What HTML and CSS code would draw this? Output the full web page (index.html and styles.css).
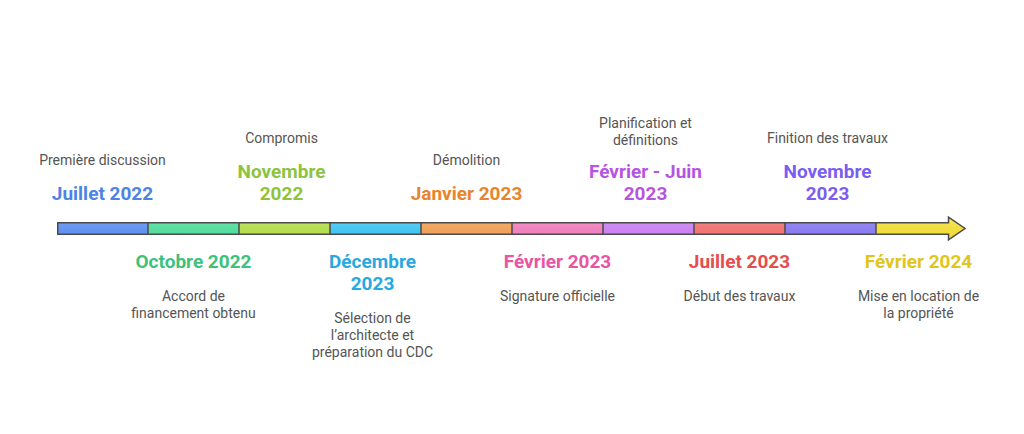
FILE: index.html
```html
<!DOCTYPE html>
<html lang="fr">
<head>
<meta charset="utf-8">
<title>Chronologie du projet</title>
<link rel="stylesheet" href="styles.css">
</head>
<body>
<main class="page">
  <section class="timeline">
    <div class="event top c1">
      <p class="desc">Première discussion</p>
      <p class="date blue">Juillet 2022</p>
    </div>
    <div class="event top c3 nudge">
      <p class="desc">Compromis</p>
      <p class="date lime">Novembre 2022</p>
    </div>
    <div class="event top c5">
      <p class="desc">Démolition</p>
      <p class="date orange">Janvier 2023</p>
    </div>
    <div class="event top c7 nudge tight">
      <p class="desc">Planification et définitions</p>
      <p class="date purple">Février - Juin 2023</p>
    </div>
    <div class="event top c9 nudge">
      <p class="desc">Finition des travaux</p>
      <p class="date indigo">Novembre 2023</p>
    </div>

    <svg class="bar" width="910" height="26" viewBox="0 0 910 26" aria-hidden="true">
      <defs>
        <linearGradient id="shine" x1="0" y1="0" x2="0" y2="1">
          <stop offset="0" stop-color="#ffffff" stop-opacity="0.2"/>
          <stop offset="1" stop-color="#000000" stop-opacity="0.03"/>
        </linearGradient>
      </defs>
      <rect x="0" y="7" width="91" height="13" fill="#6398ff"/>
      <rect x="91" y="7" width="91" height="13" fill="#55e9a4"/>
      <rect x="182" y="7" width="91" height="13" fill="#bfea50"/>
      <rect x="273" y="7" width="91" height="13" fill="#42d1ff"/>
      <rect x="364" y="7" width="91" height="13" fill="#ffa95c"/>
      <rect x="455" y="7" width="91" height="13" fill="#ff85c8"/>
      <rect x="546" y="7" width="91" height="13" fill="#d588ff"/>
      <rect x="637" y="7" width="91" height="13" fill="#ff7876"/>
      <rect x="728" y="7" width="91" height="13" fill="#8f80ff"/>
      <path d="M819,7 H891 V1.5 L908.5,13.5 L891,25.5 V20 H819 Z" fill="#ffea3a"/>
      <path d="M0,7 H891 V1.5 L908.5,13.5 L891,25.5 V20 H0 Z" fill="url(#shine)"/>
      <g stroke="#4a4a4a" stroke-width="1.5">
        <line x1="91" y1="7" x2="91" y2="20"/>
        <line x1="182" y1="7" x2="182" y2="20"/>
        <line x1="273" y1="7" x2="273" y2="20"/>
        <line x1="364" y1="7" x2="364" y2="20"/>
        <line x1="455" y1="7" x2="455" y2="20"/>
        <line x1="546" y1="7" x2="546" y2="20"/>
        <line x1="637" y1="7" x2="637" y2="20"/>
        <line x1="728" y1="7" x2="728" y2="20"/>
        <line x1="819" y1="7" x2="819" y2="20"/>
      </g>
      <path d="M0.75,7.75 H891.5 V2.2 L908,13.5 L891.5,24.8 V19.25 H0.75 Z" fill="none" stroke="#4a4a4a" stroke-width="1.5" stroke-linejoin="miter"/>
    </svg>

    <div class="event bottom c2">
      <p class="date green">Octobre 2022</p>
      <p class="desc">Accord de financement obtenu</p>
    </div>
    <div class="event bottom c4 nudge">
      <p class="date cyan">Décembre 2023</p>
      <p class="desc">Sélection de l’architecte et préparation du CDC</p>
    </div>
    <div class="event bottom c6">
      <p class="date pink">Février 2023</p>
      <p class="desc">Signature officielle</p>
    </div>
    <div class="event bottom c8">
      <p class="date red">Juillet 2023</p>
      <p class="desc">Début des travaux</p>
    </div>
    <div class="event bottom c10 nudge">
      <p class="date yellow">Février 2024</p>
      <p class="desc">Mise en location de la propriété</p>
    </div>
  </section>
</main>
</body>
</html>
```
FILE: styles.css
```css
html, body {
  margin: 0;
  padding: 0;
  background: #ffffff;
}

body {
  font-family: Roboto, "Liberation Sans", Arial, sans-serif;
  width: 1024px;
  height: 434px;
  overflow: hidden;
}

.page {
  padding: 114px 0 0 57px;
}

.timeline {
  display: grid;
  grid-template-columns: repeat(10, 91px);
  grid-template-rows: 91px 26px auto;
  row-gap: 10px;
}

.event {
  display: flex;
  flex-direction: column;
  align-items: center;
  width: 91px;
}

.event.nudge {
  margin-inline-start: -3px;
}

.event.top {
  grid-row: 1;
  align-self: end;
  gap: 14px;
}

.event.top.tight {
  gap: 12px;
}

.event.bottom {
  grid-row: 3;
  align-self: start;
  gap: 15px;
}

.c1 { grid-column: 1; }
.c2 { grid-column: 2; }
.c3 { grid-column: 3; }
.c4 { grid-column: 4; }
.c5 { grid-column: 5; }
.c6 { grid-column: 6; }
.c7 { grid-column: 7; }
.c8 { grid-column: 8; }
.c9 { grid-column: 9; }
.c10 { grid-column: 10; }

.bar {
  grid-row: 2;
  grid-column: 1 / -1;
  display: block;
}

.desc {
  margin: 0;
  width: 129px;
  flex: none;
  text-align: center;
  font-size: 14px;
  line-height: 17px;
  color: #555555;
}

.date {
  margin: 0;
  width: 122px;
  flex: none;
  text-align: center;
  font-size: 19px;
  line-height: 22px;
  font-weight: 700;
}

.blue { color: #4c83e4; }
.green { color: #3dc27c; }
.lime { color: #8dc33d; }
.cyan { color: #27a8df; }
.orange { color: #e8842b; }
.pink { color: #e855a2; }
.purple { color: #b654e2; }
.red { color: #e64d4e; }
.indigo { color: #7a5ef0; }
.yellow { color: #e0c61c; }
```
